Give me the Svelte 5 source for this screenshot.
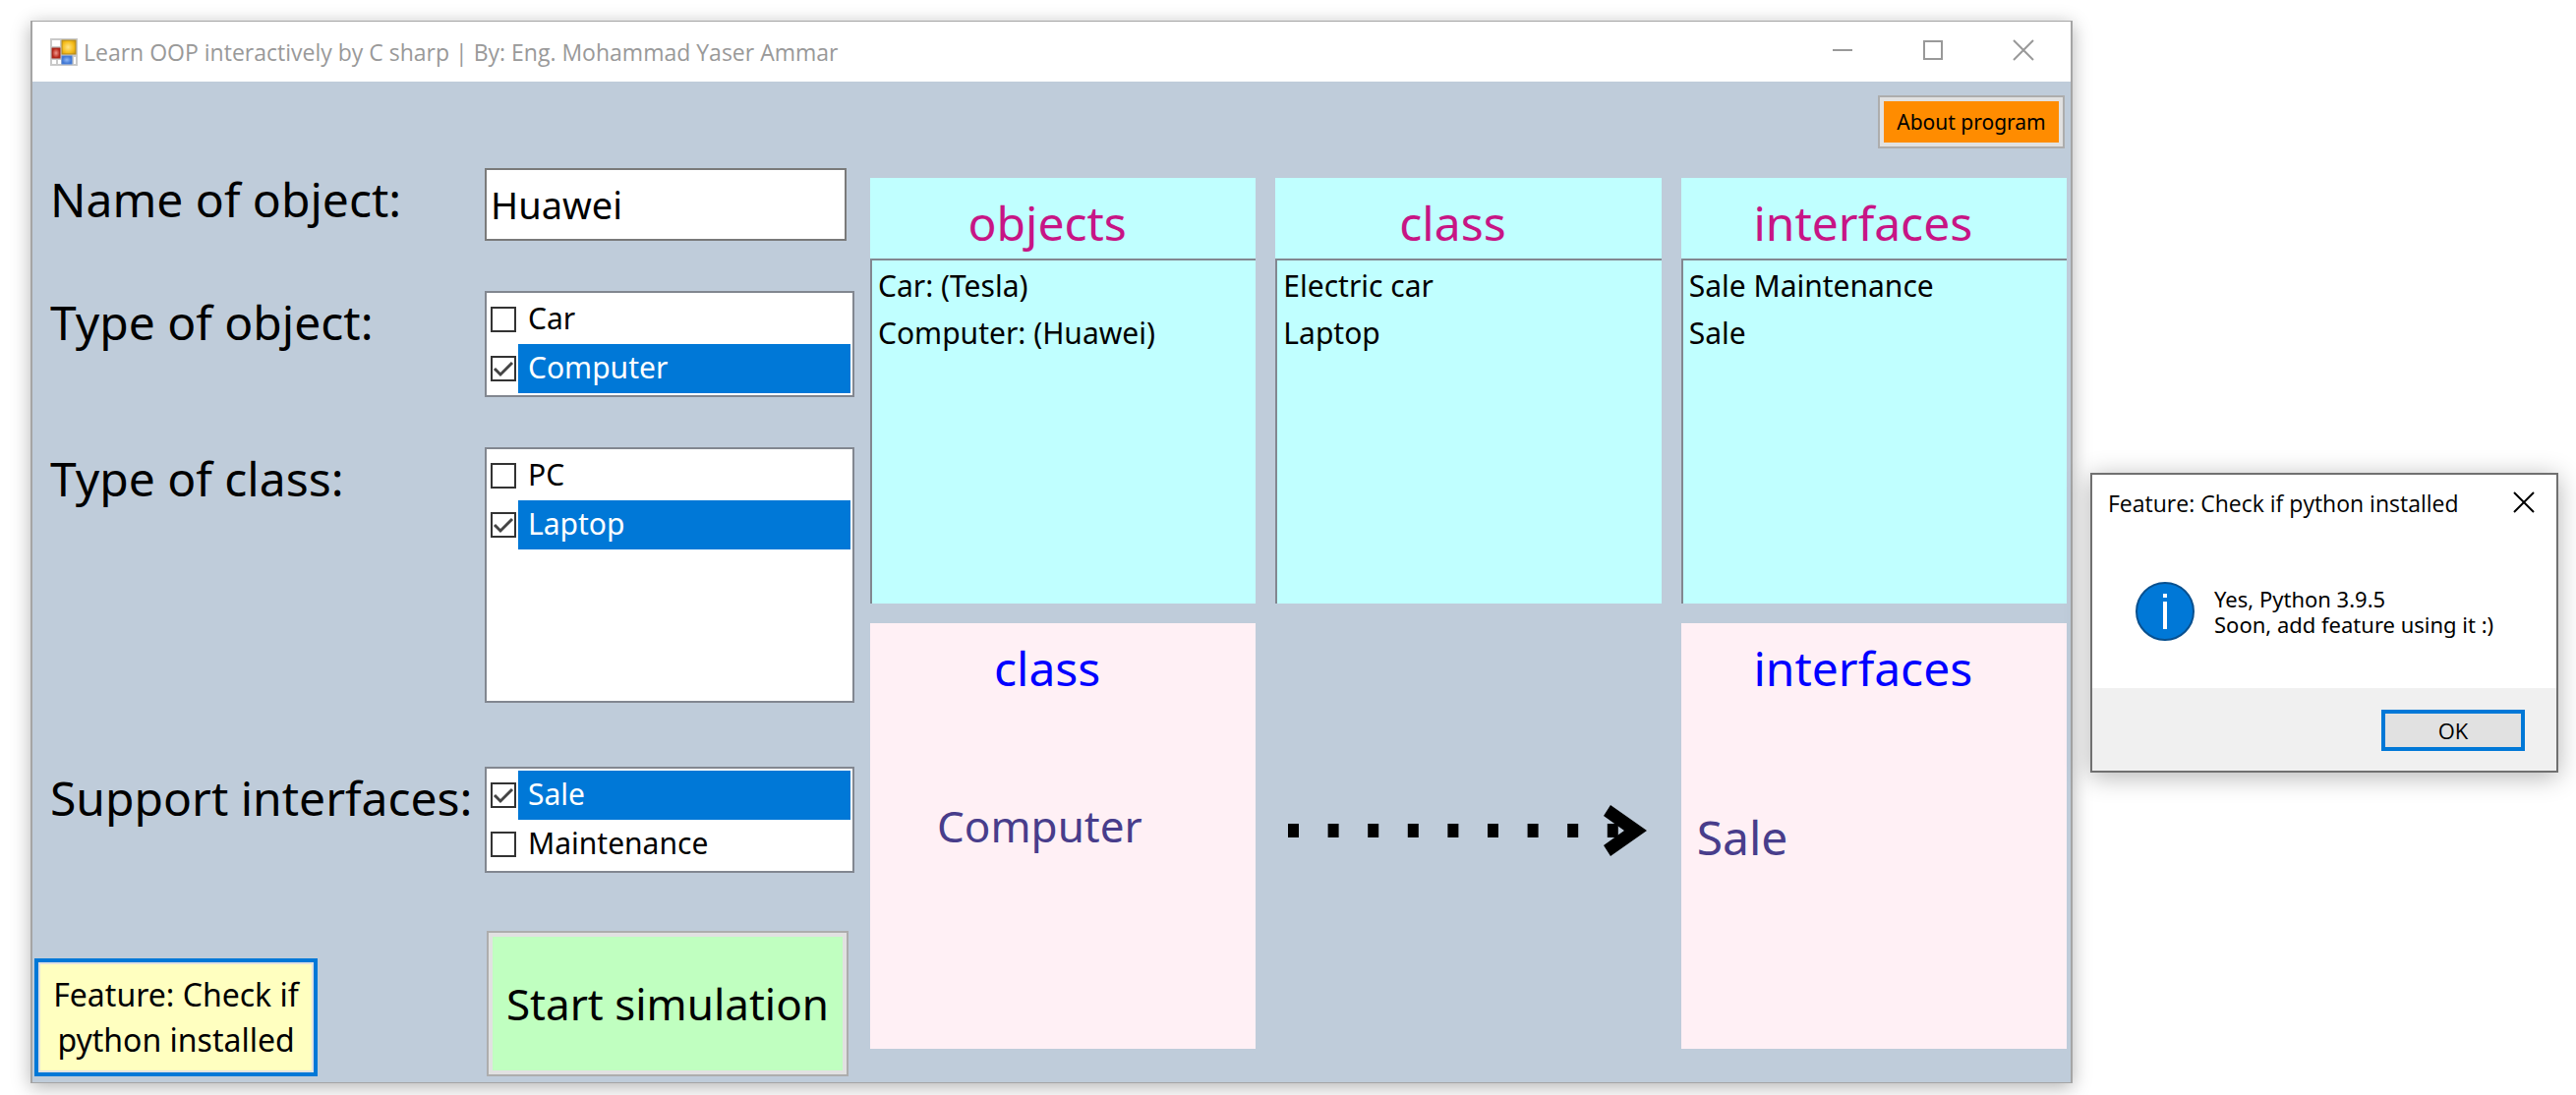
<script>
  let name = $state('Huawei');

  let pickers = $state([
    {
      id: 'object-type',
      label: 'Type of object:',
      options: [
        { text: 'Car', checked: false },
        { text: 'Computer', checked: true }
      ]
    },
    {
      id: 'class-type',
      label: 'Type of class:',
      tall: true,
      options: [
        { text: 'PC', checked: false },
        { text: 'Laptop', checked: true }
      ]
    },
    {
      id: 'interfaces',
      label: 'Support interfaces:',
      options: [
        { text: 'Sale', checked: true },
        { text: 'Maintenance', checked: false }
      ]
    }
  ]);

  const tables = [
    { title: 'objects', items: ['Car: (Tesla)', 'Computer: (Huawei)'] },
    { title: 'class', items: ['Electric car', 'Laptop'] },
    { title: 'interfaces', items: ['Sale Maintenance', 'Sale'] }
  ];

  const dots = [0, 1, 2, 3, 4, 5, 6, 7, 8];
</script>

<div class="desktop">
  <main class="window">
    <header class="titlebar">
      <svg class="app-icon" viewBox="0 0 28 28" aria-hidden="true">
        <defs>
          <radialGradient id="gold" cx="45%" cy="50%" r="75%">
            <stop offset="0" stop-color="#ffe488" />
            <stop offset=".55" stop-color="#f6bd1b" />
            <stop offset="1" stop-color="#c48c0a" />
          </radialGradient>
          <radialGradient id="red">
            <stop offset="0" stop-color="#ee9a8e" />
            <stop offset="1" stop-color="#b82214" />
          </radialGradient>
          <radialGradient id="blue">
            <stop offset="0" stop-color="#8db7f7" />
            <stop offset="1" stop-color="#3c73d2" />
          </radialGradient>
        </defs>
        <rect width="28" height="28" fill="#c9c9c9" />
        <rect x="2" y="2" width="8" height="6" fill="#fff" />
        <rect x="2" y="22" width="4" height="4" fill="#fff" />
        <rect x="8" y="22" width="3" height="4" fill="#fff" />
        <rect x="24" y="19" width="2" height="7" fill="#fff" />
        <rect x="12" y="2" width="14" height="14" fill="url(#gold)" stroke="#b48a1c" />
        <rect x="2" y="10" width="8" height="10" fill="url(#red)" stroke="#a02a1e" />
        <rect x="12" y="18" width="10" height="8" fill="url(#blue)" stroke="#4a80d8" />
      </svg>
      <h1>Learn OOP interactively by C sharp | By: Eng. Mohammad Yaser Ammar</h1>
      <div class="controls">
        <button aria-label="Minimize">
          <svg viewBox="0 0 20 20"><path d="M0 10H20" /></svg>
        </button>
        <button aria-label="Maximize">
          <svg viewBox="0 0 20 20"><path d="M1 1H19V19H1Z" /></svg>
        </button>
        <button aria-label="Close">
          <svg viewBox="0 0 20 20"><path d="M0 0L20 20M20 0L0 20" /></svg>
        </button>
      </div>
    </header>

    <div class="client">
      <form class="form" onsubmit={(e) => e.preventDefault()}>
        <div class="field">
          <label class="caption" for="object-name">Name of object:</label>
          <input id="object-name" class="name" type="text" bind:value={name} />
        </div>

        {#each pickers as picker}
          <div class="field" role="group" aria-labelledby={picker.id}>
            <span class="caption" id={picker.id}>{picker.label}</span>
            <div class="checklist" class:tall={picker.tall}>
              {#each picker.options as option}
                <label class="option">
                  <span class="tick">
                    <input type="checkbox" bind:checked={option.checked} />
                    {#if option.checked}
                      <svg viewBox="0 0 26 26" aria-hidden="true"><path d="M4 13L10 19L22 7" /></svg>
                    {/if}
                  </span>
                  <span class="option-text" class:selected={option.checked}>{option.text}</span>
                </label>
              {/each}
            </div>
          </div>
        {/each}

        <div class="actions">
          <button type="button" class="feature">Feature: Check if python installed</button>
          <button type="submit" class="start">Start simulation</button>
        </div>
      </form>

      <div class="results">
        <button class="about">About program</button>

        <div class="grid">
          {#each tables as table}
            <section class="panel cyan">
              <h2 class:wide={table.title === 'interfaces'}>{table.title}</h2>
              <ul>
                {#each table.items as item}<li>{item}</li>{/each}
              </ul>
            </section>
          {/each}

          <section class="panel pink">
            <h2>class</h2>
            <p class="from">Computer</p>
          </section>

          <svg class="arrow" viewBox="0 0 366 52" role="img" aria-label="implements">
            {#each dots as dot}
              <rect x={1 + dot * 40.6} y="19" width="11" height="14" />
            {/each}
            <path d="M329 0L366 26L329 52L322 41L343 26L322 11Z" />
          </svg>

          <section class="panel pink">
            <h2 class="wide">interfaces</h2>
            <p class="to">Sale</p>
          </section>
        </div>
      </div>
    </div>
  </main>

  <aside class="popup">
    <section class="dialog" role="dialog" aria-labelledby="dialog-title">
      <header>
        <h2 id="dialog-title">Feature: Check if python installed</h2>
        <button class="close" aria-label="Close">
          <svg viewBox="0 0 20 20"><path d="M0 0L20 20M20 0L0 20" /></svg>
        </button>
      </header>
      <div class="message">
        <svg viewBox="0 0 60 60" aria-hidden="true">
          <circle cx="30" cy="30" r="29" fill="#0078d7" stroke="#08508f" stroke-width="2" />
          <path d="M28 12h4v4h-4zM28 20h4v28h-4z" fill="#fff" />
        </svg>
        <p>Yes, Python 3.9.5<br />Soon, add feature using it :)</p>
      </div>
      <footer><button class="ok">OK</button></footer>
    </section>
  </aside>
</div>

<style>
  :global(body) {
    background: #fff;
  }

  .desktop,
  .desktop * {
    box-sizing: border-box;
  }

  .desktop {
    display: grid;
    grid-template-columns: minmax(0, 1fr) 476px;
    gap: 18px;
    min-height: 100vh;
    padding: 21px 18px 12px 31px;
    font-family: 'Comic Sans MS', 'Noto Sans', sans-serif;
    color: #000;
  }

  h1,
  h2,
  p,
  ul {
    margin: 0;
    padding: 0;
    font-weight: 400;
  }

  button,
  input {
    margin: 0;
    font-family: inherit;
    color: inherit;
    border-radius: 0;
  }

  .window {
    display: flex;
    flex-direction: column;
    border: 1px solid #a5a5a5;
    border-width: 1px 2px;
    background: #bfccda;
    box-shadow: 0 4px 18px rgba(0, 0, 0, 0.3);
  }

  .titlebar {
    display: flex;
    align-items: center;
    height: 61px;
    padding: 0 2px 0 18px;
    background: #fff;
    font-family: 'Segoe UI', 'Open Sans', sans-serif;
  }

  .app-icon {
    width: 28px;
    height: 28px;
    margin-right: 6px;
  }

  h1 {
    flex: 1;
    font-size: 23px;
    line-height: 32px;
    color: #999;
  }

  .controls {
    display: flex;
    align-self: flex-start;
  }

  .controls button,
  .close {
    display: flex;
    align-items: center;
    justify-content: center;
    width: 92px;
    height: 58px;
    padding: 0;
    border: 0;
    background: none;
  }

  .controls svg,
  .close svg {
    width: 20px;
    height: 20px;
    fill: none;
    stroke: #999;
    stroke-width: 2;
    overflow: visible;
  }

  .client {
    flex: 1;
    display: grid;
    grid-template-columns: 836px minmax(0, 1fr);
    gap: 16px;
  }

  .form {
    display: flex;
    flex-direction: column;
    gap: 51px;
    padding: 88px 0 6px;
  }

  .field {
    display: grid;
    grid-template-columns: 442px 1fr;
    padding-left: 18px;
  }

  .field:nth-child(4) {
    margin-top: 14px;
  }

  .caption {
    font-size: 48px;
    line-height: 64px;
    white-space: nowrap;
  }

  .name {
    width: 368px;
    height: 74px;
    padding: 0 4px;
    border: 2px solid #7a7a7a;
    background: #fff;
    font-size: 38px;
  }

  .checklist {
    min-height: 108px;
    padding: 2px;
    border: 2px solid #828790;
    background: #fff;
  }

  .tall {
    min-height: 260px;
  }

  .option {
    display: flex;
    align-items: center;
    height: 50px;
  }

  .tick {
    position: relative;
    display: flex;
    width: 26px;
    height: 26px;
    margin: 0 2px;
  }

  .tick input {
    appearance: none;
    width: 26px;
    height: 26px;
    border: 2px solid #333;
    background: #fff;
  }

  .tick svg {
    position: absolute;
    inset: 0;
    fill: none;
    stroke: #444;
    stroke-width: 3;
    pointer-events: none;
  }

  .option-text {
    flex: 1;
    height: 50px;
    padding-left: 10px;
    font-size: 30px;
    line-height: 48px;
  }

  .selected {
    background: #0078d7;
    color: #fff;
  }

  .actions {
    display: flex;
    align-items: flex-end;
    justify-content: space-between;
    margin-top: auto;
    padding: 0 6px 0 2px;
  }

  .feature {
    width: 288px;
    height: 120px;
    padding: 0 4px;
    border: 4px solid #0078d7;
    background: #ffffc0;
    box-shadow: inset 0 0 0 2px #e1e1e1;
    font-size: 32px;
    line-height: 46px;
  }

  .start {
    width: 368px;
    height: 148px;
    padding: 0;
    border: 2px solid #adadad;
    background: #c0ffc0;
    box-shadow: inset 0 0 0 4px #e1e1e1;
    font-size: 44px;
  }

  .results {
    display: flex;
    flex-direction: column;
    padding: 14px 4px 34px 0;
  }

  .about {
    align-self: flex-end;
    width: 190px;
    height: 54px;
    margin: 0 2px 30px;
    padding: 0;
    border: 2px solid #adadad;
    background: #ff8c00;
    box-shadow: inset 0 0 0 4px #e1e1e1;
    font-size: 21px;
  }

  .grid {
    flex: 1;
    display: grid;
    grid-template-columns: repeat(3, minmax(0, 1fr));
    grid-template-rows: 1fr 1fr;
    gap: 20px;
  }

  .panel {
    display: flex;
    flex-direction: column;
  }

  .panel h2 {
    height: 82px;
    padding: 14px 32px 0 0;
    font-size: 48px;
    line-height: 64px;
    text-align: center;
  }

  .panel .wide {
    padding-right: 22px;
  }

  .cyan {
    background: #c0ffff;
  }

  .cyan h2 {
    color: #c71585;
  }

  .pink {
    background: #fff0f5;
  }

  .pink h2 {
    color: #00f;
  }

  ul {
    flex: 1;
    padding: 2px 6px;
    border: solid #828790;
    border-width: 2px 0 0 2px;
    list-style: none;
    font-size: 30px;
    line-height: 48px;
  }

  .pink p {
    font-size: 44px;
    line-height: 64px;
    color: #483d8b;
  }

  .pink .from {
    padding: 92px 0 0 68px;
  }

  .pink .to {
    padding: 104px 0 0 16px;
    font-size: 48px;
  }

  .arrow {
    align-self: center;
    width: 366px;
    max-width: 100%;
    margin: 0 0 12px 12px;
  }

  .popup {
    padding-top: 460px;
    font-family: 'Segoe UI', 'Open Sans', sans-serif;
    font-size: 23px;
  }

  .dialog {
    border: 2px solid #707070;
    background: #fff;
    box-shadow: 0 4px 24px rgba(0, 0, 0, 0.3);
  }

  .dialog header {
    display: flex;
    align-items: center;
    justify-content: space-between;
    height: 56px;
    padding-left: 16px;
  }

  .dialog h2 {
    padding-top: 2px;
    font-size: 23px;
    line-height: 32px;
  }

  .dialog .close {
    width: 66px;
    height: 56px;
  }

  .close svg {
    stroke: #000;
  }

  .message {
    display: flex;
    gap: 20px;
    padding: 53px 24px 48px 44px;
  }

  .message svg {
    width: 60px;
    height: 60px;
  }

  .message p {
    padding-top: 4px;
    font-family: 'Segoe UI', 'Noto Sans', sans-serif;
    font-size: 22px;
    line-height: 26px;
  }

  .dialog footer {
    display: flex;
    justify-content: flex-end;
    padding: 22px 32px 20px;
    background: #f0f0f0;
  }

  .ok {
    width: 146px;
    height: 42px;
    padding: 0;
    border: 4px solid #0078d7;
    background: #e1e1e1;
    font-size: 22px;
  }
</style>
